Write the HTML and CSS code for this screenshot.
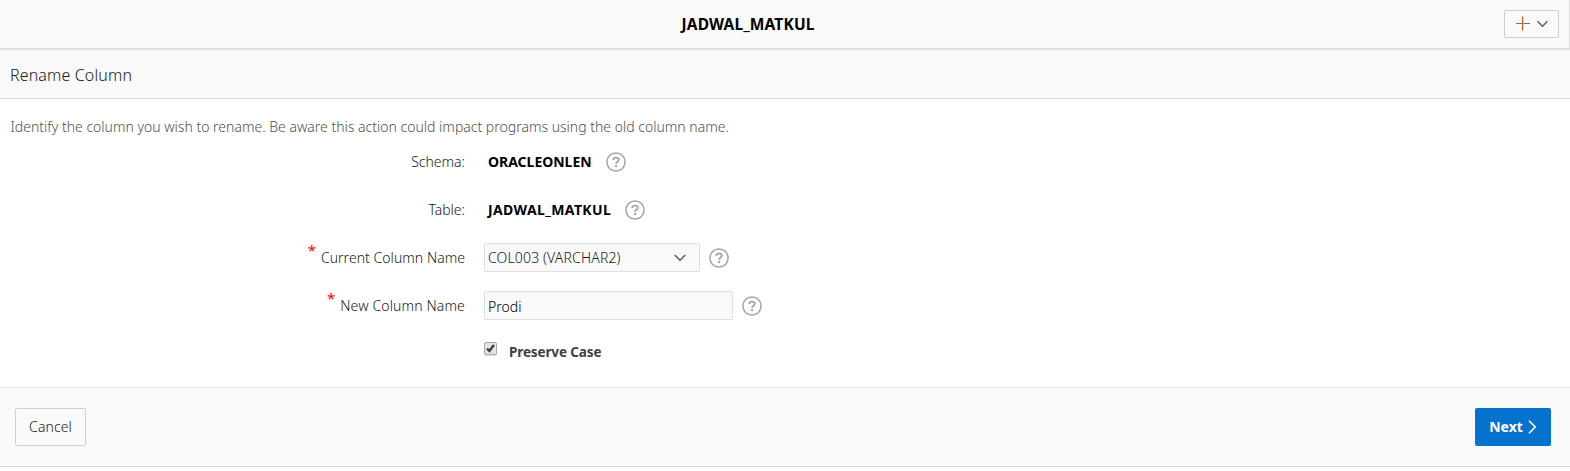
FILE: index.html
```html
<!DOCTYPE html>
<html lang="en">
<head>
<meta charset="utf-8">
<title>Rename Column</title>
<link rel="stylesheet" href="styles.css">
</head>
<body>
<svg class="defs" aria-hidden="true">
  <symbol id="help" viewBox="0 0 20 20">
    <circle cx="10" cy="10" r="9.1" fill="none" stroke="#a3a3a3" stroke-width="1.5"/>
    <path d="M7.2 7.9C7.3 6.3 8.5 5.6 10 5.6s2.8.8 2.8 2.2c0 1.9-2.7 2-2.7 3.9" fill="none" stroke="#a3a3a3" stroke-width="1.8"/>
    <circle cx="10.1" cy="14" r="1.2" fill="#a3a3a3"/>
  </symbol>
</svg>
<header class="topbar">
  <h1 class="topbar-title">JADWAL_MATKUL</h1>
  <button class="create" aria-label="Create">
    <svg width="32" height="16" viewBox="0 0 32 16" fill="none">
      <path d="M0 7.5h14" stroke="#77706c"/><path d="M6.5 .5v14" stroke="#b4622f"/><path d="M7.5 .5v14" stroke="#a8c8ea" stroke-width=".7"/>
      <path d="M21.5 5.3l5 5 5-5" stroke="#555b68" stroke-width="1.3"/>
    </svg>
  </button>
</header>
<section class="region-title"><h2>Rename Column</h2></section>
<main class="content">
  <p class="intro">Identify the column you wish to rename. Be aware this action could impact programs using the old column name.</p>
  <div class="row"><span class="label"><span>Schema:</span></span><span class="value">ORACLEONLEN</span><svg class="help help-static"><use href="#help"/></svg></div>
  <div class="row"><span class="label"><span>Table:</span></span><span class="value table-name">JADWAL_MATKUL</span><svg class="help help-static"><use href="#help"/></svg></div>
  <div class="row"><span class="label"><span class="required">*</span><span class="current">Current Column Name</span></span>
    <div class="field select"><span>COL003 (VARCHAR2)</span><svg class="chevron" width="12" height="8" viewBox="0 0 12 8"><path d="M.7 1l5.3 5.3L11.3 1" fill="none" stroke="#555" stroke-width="1.4"/></svg></div><svg class="help"><use href="#help"/></svg></div>
  <div class="row"><span class="label"><span class="required">*</span><span class="new">New Column Name</span></span>
    <div class="field text"><span>Prodi</span></div><svg class="help"><use href="#help"/></svg></div>
  <div class="check-row"><svg class="checkbox" width="13" height="13" viewBox="0 0 13 13"><rect x=".5" y=".5" width="12" height="12" rx="1.5" fill="#e3e3e3" stroke="#aaa"/><path d="M3 6.5l2.4 2.5 4.5-6" fill="none" stroke="#3c3c3c" stroke-width="2.4"/></svg><span class="preserve">Preserve Case</span></div>
</main>
<footer class="actions">
  <button class="button cancel"><span>Cancel</span></button>
  <button class="button next"><span>Next</span><svg width="9" height="14" viewBox="0 0 9 14"><path d="M1 .8L7.2 7 1 13.2" fill="none" stroke="#fff" stroke-width="1.6"/></svg></button>
</footer>
</body>
</html>
```
FILE: styles.css
```css
* { box-sizing: border-box; }
body { margin: 0; background: #fff; color: #202020; font: 300 14px/20px "Noto Sans", "Open Sans", sans-serif; }
h1, h2, p { margin: 0; }
span { white-space: nowrap; }
button { font: inherit; color: inherit; padding: 0; }
.defs { display: none; }

.topbar { height: 50px; display: grid; grid-template-columns: 1fr auto 1fr; background: #f9f9f9; border-bottom: 2px solid #dfdfdf; border-right: 1px solid #dfdfdf; }
.topbar-title { grid-column: 2; margin: 14px 0 0 -72px; width: 134px; font-size: 15.5px; line-height: 20px; color: #000; letter-spacing: 0.16px; }
.create { justify-self: end; margin: 10px 10px 0 0; width: 55px; height: 28px; display: flex; align-items: center; justify-content: center; border: 1px solid #cfcfcf; border-radius: 2px; background: #f9f9f9; }

.region-title { height: 49px; padding: 15px 10px 0; background: #f9f9f9; border-bottom: 1px solid #dfdfdf; }
.region-title h2 { font-size: 16px; font-weight: 300; line-height: 20px; color: #202020; letter-spacing: 0.13px; }

.content { height: 288px; padding-top: 18px; }
.intro { padding-left: 10.5px; color: #505050; white-space: nowrap; letter-spacing: 0.005px; }
.row { height: 48px; display: flex; align-items: flex-start; padding-top: 15px; }
.label { width: 465px; display: flex; justify-content: flex-end; }
.current { letter-spacing: 0.04px; }
.new { letter-spacing: 0.14px; }
.required { color: #f00; font-weight: 400; font-size: 15px; line-height: 18px; margin: -7px 5px 0 0; }
.value { margin-left: 23px; font-weight: 700; color: #000; letter-spacing: -0.02px; }
.table-name { letter-spacing: 0.37px; }
.help { width: 20px; height: 20px; margin-left: 9px; }
.help-static { margin-left: 14px; }
.field { height: 29px; margin: -5px 0 0 19px; padding-left: 3px; display: flex; align-items: center; border: 1px solid #dfdfdf; border-radius: 2px; background: #f9f9f9; }
.select { width: 216px; justify-content: space-between; padding-right: 13px; letter-spacing: 0.15px; }
.text { width: 249px; color: #000; padding-top: 2px; }
.check-row { display: flex; align-items: flex-start; padding: 13px 0 0 484px; }
.checkbox { filter: drop-shadow(0 1px 0 #ddd); }
.preserve { margin-left: 12px; font-weight: 700; font-size: 13.5px; letter-spacing: -0.12px; color: #404040; }

.actions { height: 80px; padding: 20px 19px 0 15px; display: flex; justify-content: space-between; align-items: flex-start; background: #f9f9f9; border-top: 1px solid #e8e8e8; border-bottom: 1px solid #d8d8d8; }
.button { height: 38px; border-radius: 2px; display: flex; align-items: center; justify-content: center; }
.cancel { width: 71px; border: 1px solid #cfcfcf; background: #f9f9f9; letter-spacing: 0.1px; }
.next { width: 76px; border: 0; background: #0572ce; color: #fff; font-weight: 700; gap: 5px; }
```
